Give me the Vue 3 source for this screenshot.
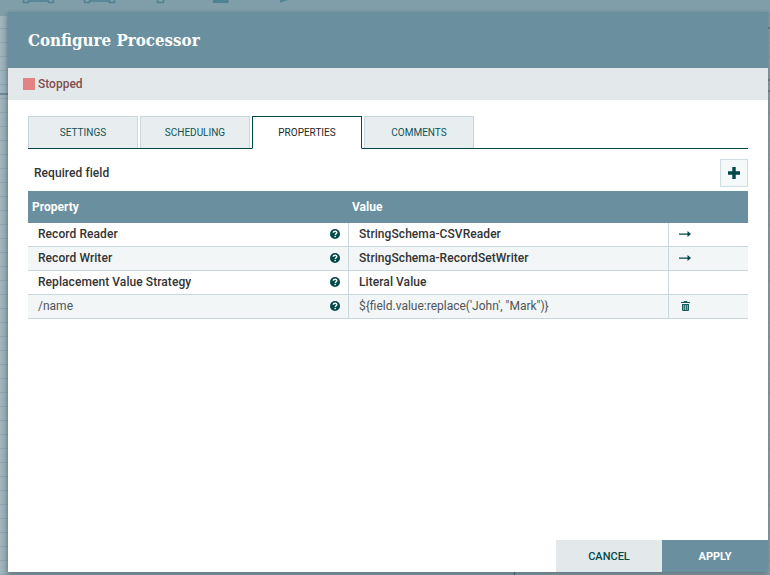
<script setup>
const tabs = [
  { label: 'SETTINGS', active: false },
  { label: 'SCHEDULING', active: false },
  { label: 'PROPERTIES', active: true },
  { label: 'COMMENTS', active: false },
]
const rows = [
  { name: 'Record Reader', value: 'StringSchema-CSVReader', bold: true, action: 'arrow' },
  { name: 'Record Writer', value: 'StringSchema-RecordSetWriter', bold: true, action: 'arrow' },
  { name: 'Replacement Value Strategy', value: 'Literal Value', bold: true, action: '' },
  { name: '/name', value: '${field.value:replace(\'John\', "Mark")}', bold: false, action: 'trash' },
]
</script>

<template>
  <div class="page">
    <div class="toolbar">
      <svg class="tool-icons" width="300" height="8" viewBox="0 0 300 8">
        <g fill="none" stroke="#4f8192" stroke-width="1.5">
          <path d="M23.500 0v2.500h5V1h20v1.500h5V0" />
          <path d="M84.500 0v2.500h5V1h20v1.500h5V0" />
          <path d="M157.500 0v2.500h6V0" />
        </g>
        <rect x="213" y="0" width="15.500" height="3" fill="#4f8192" />
        <path d="M280 0h8l-8 2.500z" fill="#4f8192" />
      </svg>
    </div>
    <div class="stage-line line-left"></div>
    <div class="stage-line line-right-a"></div>
    <div class="stage-line line-right-b"></div>
    <div class="stage-line line-right-c"></div>
    <div class="stage-tick"></div>

    <section class="dialog">
      <header class="dialog-header">Configure Processor</header>
      <div class="status">
        <span class="status-square"></span>
        <span class="status-text">Stopped</span>
      </div>
      <div class="dialog-body">
        <nav class="tabs">
          <div
            v-for="tab in tabs"
            :key="tab.label"
            class="tab"
            :class="{ active: tab.active }"
          >{{ tab.label }}</div>
        </nav>
        <div class="required-row">
          <span class="required">Required field</span>
          <button class="add-btn" type="button" aria-label="Add property">
            <svg width="12" height="12" viewBox="0 0 12 12">
              <path d="M4.300 0h3.400v4.300H12v3.400H7.700V12H4.300V7.700H0V4.300h4.300z" fill="#004849" />
            </svg>
          </button>
        </div>
        <div class="table">
          <div class="table-head">
            <div class="head-prop">Property</div>
            <div class="head-value">Value</div>
          </div>
          <div
            v-for="(row, i) in rows"
            :key="row.name"
            class="table-row"
            :class="{ odd: i % 2 === 1, bold: row.bold }"
          >
            <div class="cell cell-prop">
              <span class="prop-name">{{ row.name }}</span>
              <svg class="help" width="10" height="10" viewBox="0 0 10 10">
                <circle cx="5" cy="5" r="5" fill="#004849" />
                <path d="M3.200 3.800c.1-1 .8-1.600 1.800-1.600s1.800.6 1.800 1.500c0 1.200-1.500 1.200-1.500 2.300" fill="none" stroke="#fff" stroke-width="1.400" />
                <rect x="4.500" y="6.800" width="1.400" height="1.400" fill="#fff" />
              </svg>
            </div>
            <div class="cell cell-value">{{ row.value }}</div>
            <div class="cell cell-action">
              <svg v-if="row.action === 'arrow'" width="12" height="6" viewBox="0 0 12 6">
                <path d="M0 2.500h8.500V0L12 3 8.500 6V3.700H0z" fill="#004849" />
              </svg>
              <svg v-else-if="row.action === 'trash'" class="trash" width="9" height="10" viewBox="0 0 9 10">
                <path d="M3 0h3l.5 1H9v1H0V1h2.500zM1 3h7v6.200l-.7.800H1.700L1 9.200zm1.500 1v5h.6V4zm1.700 0v5h.6V4zm1.700 0v5h.6V4z" fill="#1a5c5e" fill-rule="evenodd" />
              </svg>
            </div>
          </div>
        </div>
      </div>
      <footer class="dialog-footer">
        <button class="footer-btn cancel" type="button">CANCEL</button>
        <button class="footer-btn apply" type="button">APPLY</button>
      </footer>
    </section>
  </div>
</template>

<style scoped>
.page {
  position: relative;
  width: 770px;
  height: 575px;
  overflow: hidden;
  background-color: #8fa7b2;
  background-image:
    linear-gradient(to bottom, rgba(110, 135, 145, 0.3) 1px, transparent 1px),
    linear-gradient(to right, #a3b6be 0, #8fa7b2 8px, #8fa7b2 100%);
  background-size: 14px 14px, 100% 100%;
  font-family: Roboto, "Liberation Sans", sans-serif;
}
.toolbar {
  position: absolute;
  left: 0;
  top: 0;
  right: 0;
  height: 16px;
  background: #7f9ea9;
}
.tool-icons {
  display: block;
}
.stage-line {
  position: absolute;
  height: 2px;
  background: #6f8790;
}
.line-left {
  left: 0;
  width: 8px;
  top: 93px;
}
.line-right-a {
  left: 768px;
  width: 2px;
  top: 27px;
}
.line-right-b {
  left: 768px;
  width: 2px;
  top: 79px;
}
.line-right-c {
  left: 768px;
  width: 2px;
  top: 90px;
}
.stage-tick {
  position: absolute;
  left: 514px;
  top: 572px;
  width: 1px;
  height: 3px;
  background: #3f555c;
  z-index: 1;
}
.dialog {
  position: absolute;
  left: 8px;
  top: 12px;
  width: 760px;
  height: 560px;
  display: flex;
  flex-direction: column;
  background: #fff;
  box-shadow: 0 2px 5px rgba(0, 0, 0, 0.35);
}
.dialog-header {
  height: 56px;
  flex: none;
  box-sizing: border-box;
  padding: 16px 0 0 20px;
  background: #6a8f9e;
  color: #fff;
  font-family: "DejaVu Serif", "Liberation Serif", serif;
  font-stretch: condensed;
  font-weight: 700;
  font-size: 16.800px;
  line-height: 24px;
}
.status {
  height: 32px;
  flex: none;
  display: flex;
  align-items: center;
  gap: 3px;
  box-sizing: border-box;
  padding-left: 15px;
  background: #e3e8eb;
}
.status-square {
  width: 12px;
  height: 12px;
  background: #e38484;
}
.status-text {
  font-size: 12px;
  font-weight: 500;
  color: #814f4f;
}
.dialog-body {
  flex: 1;
  padding: 16px 20px 0;
}
.tabs {
  display: flex;
  gap: 2px;
  height: 33px;
  box-sizing: border-box;
  border-bottom: 1px solid #004849;
}
.tab {
  width: 110px;
  height: 32px;
  box-sizing: border-box;
  border: 1px solid #c7d7dc;
  border-bottom: 0;
  background: #e8eef0;
  color: #0f5255;
  font-size: 10px;
  font-weight: 400;
  line-height: 32px;
  text-align: center;
}
.tab.active {
  height: 33px;
  border-color: #004849;
  border-bottom: 1px solid #fff;
  background: #fff;
  color: #262626;
}
.required-row {
  height: 42px;
  display: flex;
  align-items: center;
  justify-content: space-between;
}
.required {
  margin-left: 6px;
  padding-top: 6px;
  font-size: 12px;
  font-weight: 500;
  letter-spacing: 0.07px;
  color: #333;
}
.add-btn {
  width: 28px;
  height: 28px;
  margin-top: 6px;
  padding: 0;
  display: flex;
  align-items: center;
  justify-content: center;
  border: 1px solid #cfdde2;
  background: #f6f9fa;
}
.table {
  width: 720px;
}
.table-head {
  height: 32px;
  display: flex;
  align-items: center;
  background: #6a8f9e;
  color: #fff;
  font-size: 12px;
  font-weight: 700;
}
.head-prop {
  width: 320px;
  padding-left: 4px;
  box-sizing: border-box;
}
.head-value {
  padding-left: 4px;
}
.table-row {
  height: 24px;
  box-sizing: border-box;
  display: flex;
  border-bottom: 1px solid #c7d7dc;
  background: #fff;
  color: #4f5558;
  font-size: 12px;
}
.table-row.odd {
  background: #f2f6f7;
}
.table-row.bold {
  color: #333;
  font-weight: 500;
  letter-spacing: 0.07px;
}
.cell {
  box-sizing: border-box;
  display: flex;
  align-items: center;
  height: 23px;
  padding-bottom: 2px;
}
.cell-prop {
  width: 321px;
  justify-content: space-between;
  padding-left: 10px;
  padding-right: 8px;
  border-right: 1px solid #c7d7dc;
}
.help {
  display: block;
}
.cell-value {
  width: 320px;
  padding-left: 10px;
  border-right: 1px solid #c7d7dc;
}
.cell-action {
  flex: 1;
  padding-left: 10px;
}
.trash {
  margin-left: 2px;
}
.dialog-footer {
  flex: none;
  display: flex;
  justify-content: flex-end;
  height: 32px;
}
.footer-btn {
  width: 106px;
  height: 32px;
  padding: 0;
  border: 0;
  font-family: Roboto, "Liberation Sans", sans-serif;
  font-size: 11px;
}
.cancel {
  background: #e3e8eb;
  color: #004849;
  font-weight: 500;
}
.apply {
  background: #6a8f9e;
  color: #fff;
  font-weight: 700;
}
</style>
